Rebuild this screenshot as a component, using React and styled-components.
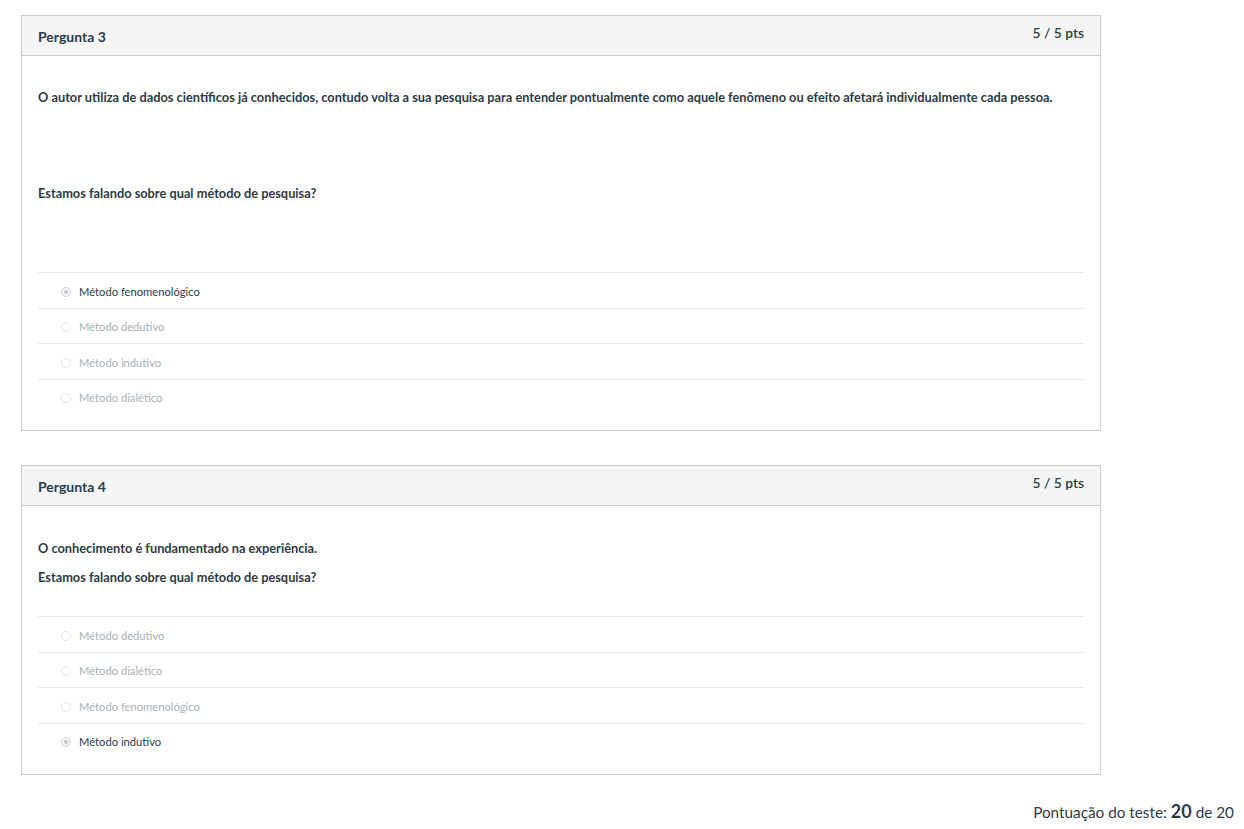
import React from 'react';
import styled, { createGlobalStyle } from 'styled-components';

const GlobalStyle = createGlobalStyle`
  html, body {
    margin: 0;
    padding: 0;
    background: #ffffff;
    font-family: Lato, "Noto Sans", "Liberation Sans", sans-serif;
    color: #2d3b45;
  }
`;

const Page = styled.div`
  padding: 15px 10px 0 21px;
`;

const QuestionCard = styled.section`
  width: 1080px;
  box-sizing: border-box;
  border: 1px solid #c7cdd1;

  & + & {
    margin-top: 34px;
  }
`;

const CardHeader = styled.header`
  height: 40px;
  box-sizing: border-box;
  display: flex;
  justify-content: space-between;
  align-items: flex-start;
  padding: 0 16px;
  background: #f5f5f5;
  border-bottom: 1px solid #c7cdd1;
`;

const QuestionName = styled.h2`
  margin: 0;
  padding-top: 12px;
  font-size: 14px;
  line-height: 18px;
  font-weight: 700;
  color: #2d3b45;
`;

const Points = styled.div`
  padding-top: 9px;
  font-size: 13.8px;
  line-height: 16px;
  font-weight: 600;
  color: #2d3b45;
`;

const CardBody = styled.div`
  padding: 32px 16px 16px;
`;

const QuestionText = styled.div`
  padding-top: ${p => p.top}px;
  padding-bottom: ${p => p.after}px;
`;

const Paragraph = styled.p`
  margin: 0 0 ${p => p.gap}px;
  font-size: 12.8px;
  line-height: 18px;
  font-weight: 700;
  color: #2d3b45;
`;

const AnswerList = styled.ul`
  list-style: none;
  margin: 0;
  padding: 0;
`;

const AnswerRow = styled.li`
  display: flex;
  align-items: center;
  height: 35.5px;
  box-sizing: border-box;
  padding: 3px 0 0 23px;
  border-top: 1px solid #e8eaec;
`;

const Radio = styled.span`
  width: 10px;
  height: 10px;
  box-sizing: border-box;
  border-radius: 50%;
  border: 1px solid ${p => (p.checked ? '#d0d4d7' : '#e3e6e8')};
  background: ${p => (p.checked ? '#f2f3f4' : '#ffffff')};
  display: flex;
  align-items: center;
  justify-content: center;
  margin-right: 8px;

  &::after {
    content: '';
    display: ${p => (p.checked ? 'block' : 'none')};
    width: 4px;
    height: 4px;
    border-radius: 50%;
    background: #c4c8cc;
  }
`;

const AnswerLabel = styled.span`
  font-size: 11.2px;
  line-height: 14px;
  color: ${p => (p.checked ? '#2d3b45' : '#a8b0b6')};
`;

const ScoreRow = styled.div`
  display: flex;
  justify-content: flex-end;
  align-items: baseline;
  gap: 4px;
  margin-top: 25px;
  font-size: 15.3px;
  color: #2d3b45;
`;

const ScoreValue = styled.strong`
  font-size: 18px;
  font-weight: 700;
`;

const questions = [
  {
    name: 'Pergunta 3',
    points: '5 / 5 pts',
    top: 0,
    paragraphs: [
      { text: 'O autor utiliza de dados científicos já conhecidos, contudo volta a sua pesquisa para entender pontualmente como aquele fenômeno ou efeito afetará individualmente cada pessoa.', gap: 78 },
      { text: 'Estamos falando sobre qual método de pesquisa?', gap: 0 },
    ],
    after: 70,
    answers: [
      { label: 'Método fenomenológico', checked: true },
      { label: 'Método dedutivo' },
      { label: 'Método indutivo' },
      { label: 'Método dialético' },
    ],
  },
  {
    name: 'Pergunta 4',
    points: '5 / 5 pts',
    top: 1,
    paragraphs: [
      { text: 'O conhecimento é fundamentado na experiência.', gap: 11 },
      { text: 'Estamos falando sobre qual método de pesquisa?', gap: 0 },
    ],
    after: 30,
    answers: [
      { label: 'Método dedutivo' },
      { label: 'Método dialético' },
      { label: 'Método fenomenológico' },
      { label: 'Método indutivo', checked: true },
    ],
  },
];

function Question({ question }) {
  return (
    <QuestionCard>
      <CardHeader>
        <QuestionName>{question.name}</QuestionName>
        <Points>{question.points}</Points>
      </CardHeader>
      <CardBody>
        <QuestionText top={question.top} after={question.after}>
          {question.paragraphs.map((p, i) => (
            <Paragraph key={i} gap={p.gap}>{p.text}</Paragraph>
          ))}
        </QuestionText>
        <AnswerList>
          {question.answers.map(a => (
            <AnswerRow key={a.label}>
              <Radio checked={a.checked} />
              <AnswerLabel checked={a.checked}>{a.label}</AnswerLabel>
            </AnswerRow>
          ))}
        </AnswerList>
      </CardBody>
    </QuestionCard>
  );
}

export default function App() {
  return (
    <Page>
      <GlobalStyle />
      {questions.map(q => (
        <Question key={q.name} question={q} />
      ))}
      <ScoreRow>
        Pontuação do teste: <ScoreValue>20</ScoreValue> de 20
      </ScoreRow>
    </Page>
  );
}
